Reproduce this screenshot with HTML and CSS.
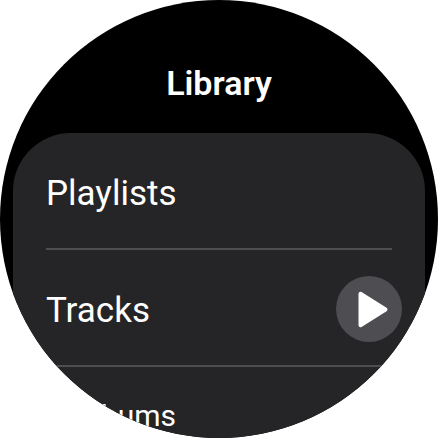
FILE: index.html
```html
<!DOCTYPE html>
<html lang="en">
<head>
    <meta charset="UTF-8">
    <meta name="viewport" content="width=device-width, initial-scale=1.0">
    <title>Library</title>
    <link rel="stylesheet" href="styles.css">
</head>
<body>
    <main class="watch">
        <h1 class="title">Library</h1>

        <ul class="list">
            <li class="item">
                <a class="item-link" href="#playlists">Playlists</a>
            </li>
            <li class="item">
                <a class="item-link" href="#tracks">Tracks</a>
                <button class="play" type="button" aria-label="Play tracks">
                    <svg class="play-icon" viewBox="0 0 66 66" aria-hidden="true">
                        <path d="M24.5 17.8 L49.5 33.5 L24.5 49.2 Z"/>
                    </svg>
                </button>
            </li>
            <li class="item item-shrunk">
                <a class="item-link" href="#albums">Albums</a>
            </li>
        </ul>
    </main>
</body>
</html>
```

FILE: styles.css
```css
* {
    box-sizing: border-box;
}
body {
    margin: 0;
    background: #fff;
    color: #fff;
    font-family: Roboto, "Liberation Sans", sans-serif;
}
/* round watch face, everything outside is clipped */
.watch {
    width: 100%;
    aspect-ratio: 1;
    overflow: hidden;
    border-radius: 50%;
    background: #000;
}
.title {
    margin: 0;
    padding: 63px 0 30px;
    font-size: 34px;
    line-height: 40px;
    font-weight: 600;
    text-align: center;
}
.list {
    margin: 0 13px;
    padding: 0 33px;
    list-style: none;
    border-radius: 58px;
    background: #252527;
}
.item {
    display: flex;
    align-items: center;
    justify-content: space-between;
    height: 117px;
    padding-top: 2px;
    border-bottom: 2px solid #4e4d50;
    font-size: 35px;
    line-height: 42px;
}
.item-link {
    padding-top: 4px;
    color: inherit;
    text-decoration: none;
}
/* row leaving the bottom edge of the screen */
.item-shrunk {
    height: 92px;
    padding-left: 28px;
    border-bottom: 0;
    font-size: 30px;
}
.play {
    width: 66px;
    height: 66px;
    margin-right: -10px;
    padding: 0;
    border: 0;
    border-radius: 50%;
    background: #4e4d51;
}
.play-icon {
    display: block;
    width: 100%;
    fill: #fff;
    stroke: #fff;
    stroke-width: 4;
    stroke-linejoin: round;
}
```
